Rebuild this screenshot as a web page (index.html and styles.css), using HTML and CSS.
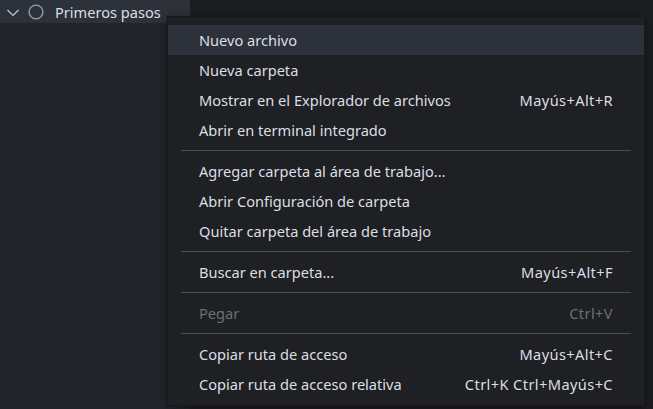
FILE: index.html
```html
<!DOCTYPE html>
<html lang="es">
<head>
<meta charset="utf-8">
<link rel="stylesheet" href="styles.css">
</head>
<body>
<div class="workbench">
  <div class="sidebar">
    <div class="tree-row">
      <svg class="chevron" width="16" height="16" viewBox="0 0 16 16"><path d="M2.5 6L8 11.5L13.5 6" fill="none" stroke="#c5cbd6" stroke-width="1.2"/></svg>
      <svg class="circle" width="16" height="16" viewBox="0 0 16 16"><circle cx="8" cy="8" r="6.9" fill="none" stroke="#9aa0a8" stroke-width="1.4"/></svg>
      <span class="tree-label">Primeros pasos</span>
    </div>
  </div>
  <div class="editor"></div>
</div>

<div class="menu">
  <div class="item active"><span>Nuevo archivo</span></div>
  <div class="item"><span>Nueva carpeta</span></div>
  <div class="item"><span>Mostrar en el Explorador de archivos</span><span class="key">Mayús+Alt+R</span></div>
  <div class="item"><span>Abrir en terminal integrado</span></div>
  <div class="sep"></div>
  <div class="item"><span>Agregar carpeta al área de trabajo...</span></div>
  <div class="item"><span>Abrir Configuración de carpeta</span></div>
  <div class="item"><span>Quitar carpeta del área de trabajo</span></div>
  <div class="sep"></div>
  <div class="item"><span>Buscar en carpeta...</span><span class="key">Mayús+Alt+F</span></div>
  <div class="sep"></div>
  <div class="item disabled"><span>Pegar</span><span class="key">Ctrl+V</span></div>
  <div class="sep"></div>
  <div class="item"><span>Copiar ruta de acceso</span><span class="key">Mayús+Alt+C</span></div>
  <div class="item"><span>Copiar ruta de acceso relativa</span><span class="key">Ctrl+K Ctrl+Mayús+C</span></div>
</div>
</body>
</html>
```

FILE: styles.css
```css
html, body {
  margin: 0;
  padding: 0;
  height: 100%;
  overflow: hidden;
}
body {
  font-family: "Noto Sans", "Open Sans", sans-serif;
  font-size: 14.6px;
  color: #dcdfe4;
  background: #1b1d20;
}
.workbench {
  display: flex;
  height: 409px;
}
.sidebar {
  width: 190px;
  background: #21252b;
}
.editor {
  flex: 1;
  background: #1c1d20;
}
.tree-row {
  height: 23px;
  display: flex;
  align-items: center;
  background: #2c313a;
  padding-left: 5px;
}
.chevron { margin-right: 7px; }
.circle { margin-right: 11px; }
.tree-label { color: #dcdfe4; }

.menu {
  position: absolute;
  left: 167px;
  top: 16px;
  width: 476px;
  height: 380px;
  padding: 8px 0 0;
  background: #1f2023;
  border: 1px solid #18191b;
  box-shadow: 0 2px 8px rgba(0, 0, 0, 0.45);
}
.item {
  height: 30px;
  display: flex;
  align-items: center;
  justify-content: space-between;
  padding: 0 31px;
}
.item.active {
  background: #2c313a;
}
.item.disabled { color: #6b6f76; }
.key { letter-spacing: 0.4px; }
.sep {
  margin: 5px 13px;
  border-bottom: 1px solid #4a4d52;
}
```
